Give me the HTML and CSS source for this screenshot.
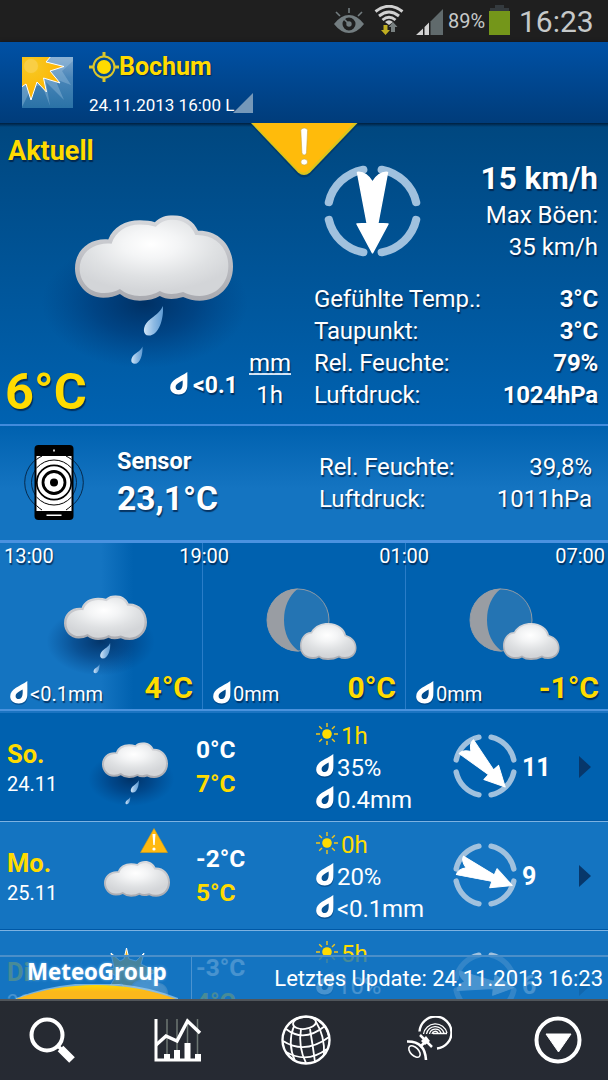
FILE: index.html
```html
<!DOCTYPE html>
<html lang="de">
<head>
    <meta charset="UTF-8">
    <meta name="viewport" content="width=device-width, initial-scale=1.0">
    <title>Wetter - Bochum</title>

    <link rel="stylesheet" href="styles.css">
</head>
<body>
    <!-- Shared icons -->
    <svg class="defs" width="0" height="0">
        <defs>
            <radialGradient id="cloudFill" cx="0.48" cy="0.32" r="0.62">
                <stop offset="0" stop-color="#ffffff"/>
                <stop offset="0.3" stop-color="#f4f5f6"/>
                <stop offset="0.7" stop-color="#dfe1e3"/>
                <stop offset="1" stop-color="#d3d5d8"/>
            </radialGradient>
            <linearGradient id="cloudEdge" x1="0" y1="0" x2="0" y2="1">
                <stop offset="0" stop-color="#d8dade"/>
                <stop offset="0.5" stop-color="#bfc0c5"/>
                <stop offset="1" stop-color="#a9aab0"/>
            </linearGradient>
            <radialGradient id="shade">
                <stop offset="0" stop-color="#002a5a" stop-opacity="0.85"/>
                <stop offset="0.5" stop-color="#00306a" stop-opacity="0.5"/>
                <stop offset="1" stop-color="#003a7a" stop-opacity="0"/>
            </radialGradient>
            <linearGradient id="dropFill" x1="0" y1="0" x2="1" y2="0">
                <stop offset="0" stop-color="#cfe4f7"/>
                <stop offset="0.5" stop-color="#8fbbe4"/>
                <stop offset="1" stop-color="#5f9bd3"/>
            </linearGradient>
            <radialGradient id="sunFill" gradientUnits="userSpaceOnUse" cx="9" cy="9" r="32">
                <stop offset="0" stop-color="#fbd653"/>
                <stop offset="0.25" stop-color="#f8c41c"/>
                <stop offset="1" stop-color="#ffb400"/>
            </radialGradient>
            <linearGradient id="skyFill" x1="0" y1="0" x2="0" y2="1">
                <stop offset="0" stop-color="#7ea6cc"/>
                <stop offset="0.4" stop-color="#4a86b9"/>
                <stop offset="1" stop-color="#2a72a6"/>
            </linearGradient>
            <linearGradient id="arcFill" x1="0" y1="0" x2="0" y2="1">
                <stop offset="0" stop-color="#ffd800"/>
                <stop offset="0.45" stop-color="#fbb81b"/>
            </linearGradient>
        </defs>
        <symbol id="cloud" viewBox="0 0 475 258">
            <path fill="url(#cloudEdge)" d="M100 73C115 35 150 15 195 15Q222 15 240 21C255 5 275 0 295 0C330 0 357 18 370 47C430 45 475 90 475 155C475 215 430 257 375 257Q348 257 325 246Q305 252 290 252Q270 252 255 243Q232 257 195 257Q160 257 135 237Q115 248 85 248C35 248 0 205 0 160C0 105 45 68 100 73Z"/>
            <path fill="url(#cloudFill)" d="M110 86C122 48 155 28 195 28Q222 28 243 35C258 19 275 14 295 14C325 14 350 30 362 60C420 57 461 97 461 153C461 205 425 242 375 243Q348 243 325 231Q305 237 290 237Q270 237 255 228Q232 243 195 243Q160 243 135 222Q115 234 87 234C42 234 14 198 14 160C14 115 55 80 110 86Z"/>
        </symbol>
        <symbol id="rain" viewBox="0 0 475 450" overflow="visible">
            <ellipse cx="210" cy="265" rx="310" ry="195" fill="url(#shade)"/>
            <use href="#cloud" width="475" height="258"/>
            <path fill="url(#dropFill)" d="M264 273C268 310 252 362 222 362C202 361 203 335 220 318C240 300 255 295 264 273Z"/>
            <path fill="url(#dropFill)" d="M203 395C204 420 196 447 180 447C166 446 167 431 176 421C188 411 197 408 203 395Z"/>
        </symbol>
        <symbol id="moon" viewBox="0 0 91 72">
            <circle cx="32" cy="32" r="31" fill="#5a90b8" fill-opacity="0.4" stroke="#8e9aa6" stroke-width="1"/>
            <path fill="#999da3" d="M32 .5A31.500 31.500 0 0 0 33 63.500Q18 52 18 32Q18 12 32 .5Z"/>
            <path fill="url(#cloudEdge)" d="M45 44C49 37 56 35 62 35C72 35 79 41 80 47C87 49 90.500 54 90.500 60C90.500 67 85 71 79 71Q75 71 73 69.500Q68 72 62 72Q56 72 53 69.500Q50 71 47 71C39 71 34 66 34 58C34 50 39 44 45 44Z"/>
            <path fill="url(#cloudFill)" d="M46 45.500C50 38.500 56 36.500 62 36.500C71 36.500 77 42 78.500 48.200C85 50 89 54.500 89 60C89 66 84 69 79 69Q75 69 73 67.500Q68 70 62 70Q56 70 53 67.500Q50 69 47 69C40 69 35.500 65 35.500 58C35.500 51 40 45.500 46 45.500Z"/>
        </symbol>
        <symbol id="drop" viewBox="0 0 18 24">
            <path fill="#00356b" fill-opacity="0.5" transform="translate(.3 1.400)" d="M17.300 0C17.500 6 17.500 11 17.300 14.500C17 19.500 13.500 22.500 8.800 22.500C3.500 22.500 .2 19.500 .2 15.500C.2 7.500 10 5.500 17.300 0Z"/>
            <path fill="#fff" fill-rule="evenodd" d="M17.300 0C17.500 6 17.500 11 17.300 14.500C17 19.500 13.500 22.500 8.800 22.500C3.500 22.500 .2 19.500 .2 15.500C.2 7.500 10 5.500 17.300 0ZM12.600 8.500C9 10.500 5.700 12 5.600 15.200C5.600 17.200 7.200 18.200 9 18C12.600 17.500 13 13 12.600 8.500Z"/>
        </symbol>
        <symbol id="sun" viewBox="0 0 22 22">
            <circle cx="11" cy="11" r="4.800" fill="#ffdb00"/>
            <path stroke="#f2c51a" stroke-width="1.400" d="M11 0V4M11 18V22M0 11H4M18 11H22M3.200 3.200L6 6M16 16L18.800 18.800M3.200 18.800L6 16M16 6L18.800 3.200"/>
        </symbol>
        <symbol id="ring" viewBox="0 0 100 100">
            <path fill="none" stroke="#a0c1de" stroke-width="8.500" stroke-linecap="round" d="M40.500 5A46 46 0 0 0 5 40.500M59.500 5A46 46 0 0 1 95 40.500M40.500 95A46 46 0 0 1 5 59.500M59.500 95A46 46 0 0 0 95 59.500"/>
        </symbol>
        <symbol id="arrow" viewBox="0 0 100 100" overflow="visible">
            <path fill="#fff" stroke="#fff" stroke-width="1.500" stroke-linejoin="round" d="M34.500 8Q43 7 50 18.500Q57 7 65.500 8L55.500 63.500L66 64L50 95.500L34 64L44.500 63.500Z"/>
        </symbol>
    </svg>

    <div class="statusbar">
        <svg class="eye" width="30" height="26" viewBox="0 0 30 26">
            <path fill="#737d80" fill-rule="evenodd" d="M0 16Q7 7 15 7Q23 7 30 16Q23 25 15 25Q7 25 0 16ZM15 9.500A6.500 6.500 0 1 0 15 22.500A6.500 6.500 0 1 0 15 9.500Z"/>
            <circle cx="15" cy="16" r="2.700" fill="#737d80"/>
            <path stroke="#737d80" stroke-width="1.600" d="M15 0V5M2 4L6 8M28 4L24 8M10 11L15 16"/>
        </svg>
        <svg class="wifi" width="30" height="30" viewBox="0 0 30 30">
            <g fill="none" stroke="#d0d0d0" stroke-width="2.900">
                <path d="M1.500 6.500Q15-4 28.500 6.500M5 11Q15 3 25 11M8.500 15Q15 9.500 21.500 15"/>
            </g>
            <path fill="#d0d0d0" d="M11 17Q15 13.500 19 17L15 20Z"/>
            <path fill="#c0ae20" d="M9.500 20H13.500V25H16L11.500 30L7 25H9.500Z"/>
            <path fill="#788080" d="M17 27V22H14.700L19 17L23.500 22H21V27Z"/>
        </svg>
        <svg class="signal" width="27" height="26" viewBox="0 0 27 26">
            <path fill="#d2d2d2" d="M0 26L7 19.500V26ZM8.500 26V18L13 13.500V26Z"/>
            <path fill="#606a6c" d="M14.500 26V12.500L27 0V26Z"/>
        </svg>
        <span class="percent">89%</span>
        <svg class="battery" width="21" height="30" viewBox="0 0 21 30">
            <path fill="#343a3e" d="M6 0H15V3H20V6H1V3H6Z"/>
            <path fill="#74961a" d="M0 6H21V30H0Z"/>
        </svg>
        <span class="clock">16:23</span>
    </div>

    <header class="header">
        <svg class="logo" width="51" height="51" viewBox="0 0 51 51">
            <path fill="url(#skyFill)" d="M0 0H51V51H0Z"/>
            <path fill="#a9cbe6" fill-opacity="0.35" d="M20 28L28 49L24 25L42 43L33 22L49 28L40 14L51 4V0H30L0 25V50L10 30Z"/>
            <path fill="url(#sunFill)" stroke="#fff" stroke-width="1" d="M-2-2H30L24 5L42 9.500L28 14L38 26L21.500 21L24.500 35L15 25L9 43L4 27L-2 31Z"/>
            <circle cx="9" cy="9" r="7" fill="#f9ce45"/>
        </svg>
        <div class="place">
            <div class="city">
                <svg width="30" height="30" viewBox="0 0 30 30">
                    <circle cx="15" cy="15" r="7" fill="#ffdb00"/>
                    <circle cx="15" cy="15" r="10.500" fill="none" stroke="#dcc62a" stroke-width="2"/>
                    <path stroke="#dcc62a" stroke-width="3" d="M15 0V5M15 25V30M0 15H5M25 15H30"/>
                </svg>
                <h1>Bochum</h1>
            </div>
            <div class="stamp">
                <span>24.11.2013 16:00 L</span>
                <svg width="20" height="20" viewBox="0 0 20 20"><path fill="#7598b9" d="M0 20L20 0V20Z"/></svg>
            </div>
        </div>
    </header>

    <section class="current">
        <svg class="alert" width="110" height="58" viewBox="0 0 110 58">
            <path fill="#002b55" fill-opacity="0.5" d="M2 3H107L60 52Q54 57 48 52Z"/>
            <path fill="#d9c51d" d="M1 0H107.500L60 49.500Q54 54.500 48 49.500Z"/>
            <path fill="#ffbb0b" d="M3 0H104L59 47Q54 52 49 48Z"/>
            <path fill="#fff" stroke="#c9a53b" stroke-width="0.600" d="M50.800 7.500Q51 5 54.200 5Q57.400 5 57.600 7.500L56.500 29.500Q56.300 32 54.200 32Q52.100 32 51.900 29.500Z"/>
            <ellipse cx="54.200" cy="39" rx="3.400" ry="3" fill="#fff" stroke="#c9a53b" stroke-width="0.600"/>
        </svg>
        <div class="now">
            <h2>Aktuell</h2>
            <svg class="now-icon" width="158" height="150"><use href="#rain"/></svg>
            <div class="now-row">
                <span class="now-temp">6°C</span>
                <svg class="now-drop" width="18" height="24"><use href="#drop"/></svg>
                <span class="now-rain">&lt;0.1</span>
                <div class="unit"><span>mm</span><span>1h</span></div>
            </div>
        </div>
        <div class="facts">
            <div class="wind">
                <svg width="97" height="92" viewBox="0 0 100 100" preserveAspectRatio="none">
                    <use href="#ring"/>
                    <use href="#arrow"/>
                </svg>
                <div class="speed">
                    <b>15 km/h</b>
                    <span>Max Böen:</span>
                    <span>35 km/h</span>
                </div>
            </div>
            <dl>
                <div><dt>Gefühlte Temp.:</dt><dd>3°C</dd></div>
                <div><dt>Taupunkt:</dt><dd>3°C</dd></div>
                <div><dt>Rel. Feuchte:</dt><dd>79%</dd></div>
                <div><dt>Luftdruck:</dt><dd>1024hPa</dd></div>
            </dl>
        </div>
    </section>

    <section class="sensor">
        <svg width="60" height="76" viewBox="0 0 60 76">
            <g fill="none" stroke="#04213f" stroke-width="0.900">
                <circle cx="30" cy="37.500" r="29.300"/>
                <circle cx="30" cy="37.500" r="22.500"/>
            </g>
            <rect x="10.500" y="0" width="39" height="75" rx="4" fill="#000"/>
            <path fill="#fff" d="M12.500 11H47.500V66H12.500Z"/>
            <g fill="none" stroke="#000">
                <path stroke-width="1" d="M12.500 14.500A29.300 29.300 0 0 1 18 11M42 11A29.300 29.300 0 0 1 47.500 14.500M12.500 60.500A29.300 29.300 0 0 0 18 65M42 65A29.300 29.300 0 0 0 47.500 60.500M12.500 23Q20 15 30 15Q40 15 47.500 23M12.500 52Q20 60 30 60Q40 60 47.500 52"/>
                <circle cx="30" cy="37.500" r="17.200" stroke-width="1.700"/>
                <circle cx="30" cy="37.500" r="11" stroke-width="2.800"/>
            </g>
            <circle cx="30" cy="37.500" r="4" fill="#000"/>
            <path fill="#fff" d="M22.500 69.500H37.500V71H22.500ZM29.200 4.500H30.800V6.500H29.200Z"/>
        </svg>
        <div class="sensor-temp">
            <h3>Sensor</h3>
            <b>23,1°C</b>
        </div>
        <dl>
            <div><dt>Rel. Feuchte:</dt><dd>39,8%</dd></div>
            <div><dt>Luftdruck:</dt><dd>1011hPa</dd></div>
        </dl>
    </section>

    <section class="hours">
        <div class="hour past">
            <span class="time first">13:00</span>
            <span class="time">19:00</span>
            <svg class="hour-rain" width="83" height="79"><use href="#rain"/></svg>
            <div class="hour-row">
                <svg width="18" height="24"><use href="#drop"/></svg>
                <span>&lt;0.1mm</span>
                <b>4°C</b>
            </div>
        </div>
        <div class="hour">
            <span class="time mid">01:00</span>
            <svg class="hour-moon" width="91" height="72"><use href="#moon"/></svg>
            <div class="hour-row">
                <svg width="18" height="24"><use href="#drop"/></svg>
                <span>0mm</span>
                <b>0°C</b>
            </div>
        </div>
        <div class="hour">
            <span class="time last">07:00</span>
            <svg class="hour-moon" width="91" height="72"><use href="#moon"/></svg>
            <div class="hour-row">
                <svg width="18" height="24"><use href="#drop"/></svg>
                <span>0mm</span>
                <b>-1°C</b>
            </div>
        </div>
    </section>

    <section class="days">
        <div class="day dark">
            <div class="date"><b>So.</b><span>24.11</span></div>
            <div class="day-icon"><svg class="day-rain" width="66" height="63"><use href="#rain"/></svg></div>
            <div class="range"><b>0°C</b><b class="max">7°C</b></div>
            <div class="details">
                <div class="sunny"><svg width="22" height="22"><use href="#sun"/></svg>1h</div>
                <div><svg width="18" height="24"><use href="#drop"/></svg>35%</div>
                <div><svg width="18" height="24"><use href="#drop"/></svg>0.4mm</div>
            </div>
            <svg class="compass" width="64" height="64" viewBox="0 0 100 100">
                <use href="#ring"/>
                <use href="#arrow" transform="rotate(-44 50 50)"/>
            </svg>
            <b class="force">11</b>
            <svg class="more" width="12" height="22" viewBox="0 0 12 22"><path fill="#07376b" d="M0 0L12 11L0 22Z"/></svg>
        </div>
        <div class="day">
            <div class="date"><b>Mo.</b><span>25.11</span></div>
            <div class="day-icon">
                <svg class="warn" width="28" height="25" viewBox="0 0 28 25">
                    <path fill="#ffb90f" stroke="#d99e12" stroke-width="0.600" stroke-linejoin="round" d="M14 .5L27.500 24.500H.5Z"/>
                    <path fill="#fff" d="M12.500 6H15.500L14.700 17H13.300Z"/>
                    <circle cx="14" cy="21" r="1.600" fill="#fff"/>
                </svg>
                <svg class="day-cloud" width="66" height="36"><use href="#cloud"/></svg>
            </div>
            <div class="range"><b>-2°C</b><b class="max">5°C</b></div>
            <div class="details">
                <div class="sunny"><svg width="22" height="22"><use href="#sun"/></svg>0h</div>
                <div><svg width="18" height="24"><use href="#drop"/></svg>20%</div>
                <div><svg width="18" height="24"><use href="#drop"/></svg>&lt;0.1mm</div>
            </div>
            <svg class="compass" width="64" height="64" viewBox="0 0 100 100">
                <use href="#ring"/>
                <use href="#arrow" transform="rotate(-69 50 50)"/>
            </svg>
            <b class="force">9</b>
            <svg class="more" width="12" height="22" viewBox="0 0 12 22"><path fill="#07376b" d="M0 0L12 11L0 22Z"/></svg>
        </div>
        <div class="day">
            <div class="date"><b>Di.</b><span>26.11</span></div>
            <div class="day-icon">
                <svg class="day-sun" width="66" height="60" viewBox="0 0 66 60">
                    <path fill="#f5b51b" stroke="#fff" stroke-width="1" d="M24.500 0L27 11L34 13L42 5L39 16L45 19L54 24L44 28L46 38L36 36L25 46L20 36L8 38L14 28L5 22L12 20L9 5L18 13L22 11Z"/>
                    <svg x="20" y="30" width="46" height="26"><use href="#cloud"/></svg>
                </svg>
            </div>
            <div class="range"><b>-3°C</b><b class="max">4°C</b></div>
            <div class="details">
                <div class="sunny"><svg width="22" height="22"><use href="#sun"/></svg>5h</div>
                <div><svg width="18" height="24"><use href="#drop"/></svg>10%</div>
            </div>
            <svg class="compass" width="64" height="64" viewBox="0 0 100 100">
                <use href="#ring"/>
                <use href="#arrow" transform="rotate(-83 50 50)"/>
            </svg>
            <b class="force">6</b>
            <svg class="more" width="12" height="22" viewBox="0 0 12 22"><path fill="#07376b" d="M0 0L12 11L0 22Z"/></svg>
        </div>
        <div class="update">
            <div class="brand">
                <span>MeteoGroup</span>
                <svg width="162" height="16" viewBox="0 0 162 16">
                    <path fill="#b9dcf2" fill-opacity="0.6" d="M0 14Q38-1 81-1Q124-1 162 14V16H0Z"/>
                    <path fill="url(#arcFill)" d="M0 15Q38 1 80 1Q122 1 160 15V16H0Z"/>
                </svg>
            </div>
            <p>Letztes Update: 24.11.2013 16:23</p>
        </div>
    </section>

    <nav class="nav">
        <svg width="46" height="47" viewBox="0 0 46 47">
            <circle cx="18" cy="18" r="15.500" fill="none" stroke="#fff" stroke-width="4"/>
            <path stroke="#fff" stroke-width="3.500" d="M28 28L33 33"/>
            <path stroke="#fff" stroke-width="8" d="M31.500 31.500L43 43"/>
        </svg>
        <svg width="48" height="46" viewBox="0 0 48 46">
            <path stroke="#6d7773" stroke-width="1.500" d="M13 2V37M23 2V34M33.500 2V26M43.500 2V38"/>
            <path fill="none" stroke="#fff" stroke-width="3" d="M2 2V43H47"/>
            <path fill="none" stroke="#fff" stroke-width="3.500" d="M2 28L12 19L23 24L33.500 4L46 16"/>
            <path fill="#fff" d="M10 37H16V44H10ZM20 33H26V44H20ZM30.500 26H36.500V44H30.500ZM41 37H47V44H41Z"/>
        </svg>
        <svg width="50" height="50" viewBox="0 0 50 50">
            <g fill="none" stroke="#fff" stroke-width="1.800">
                <circle cx="25" cy="25" r="23.500" stroke-width="2.400"/>
                <ellipse cx="23.500" cy="8" rx="11.500" ry="6" transform="rotate(-6 23 8)"/>
                <path d="M5 14Q23 28 44 11M2 26Q24 40 48 22M5 37Q26 49 46 34"/>
                <path d="M13 11Q6 28 14 46M20 14Q17 32 25 48M29 14Q32 32 34 47M35 7Q44 21 43 40M38 6Q46 12 48 22"/>
            </g>
        </svg>
        <svg class="satellite" width="46" height="46" viewBox="0 0 46 46">
            <g fill="none" stroke="#fff">
                <path stroke-width="2.400" d="M13.500 15.500A16 16 0 1 1 31 32.500"/>
                <path stroke-width="1.300" d="M17.500 18A12 12 0 0 1 41 17M20.500 18A9 9 0 0 1 38 17M23.500 18A6 6 0 0 1 35 17M26 18A3.200 3.200 0 0 1 32 17M27 17.500H41"/>
                <path stroke-width="2.600" d="M1 25.500Q19 25 20 44"/>
                <ellipse cx="8.500" cy="35.500" rx="7" ry="4" transform="rotate(45 8.500 35.500)" stroke-width="1.600"/>
                <path stroke-width="2.500" d="M14 31L19 26M14 19L26 31"/>
            </g>
            <path fill="#fff" d="M15 25L20 20L24 25L19 29Z"/>
        </svg>
        <svg width="48" height="48" viewBox="0 0 48 48">
            <circle cx="24" cy="24" r="21.500" fill="none" stroke="#fff" stroke-width="4"/>
            <path fill="#fff" stroke="#fff" stroke-width="1" stroke-linejoin="round" d="M12 18H37L24.500 36Z"/>
        </svg>
    </nav>
</body>
</html>
```
FILE: styles.css
```css
* {
    margin: 0;
    padding: 0;
    box-sizing: border-box;
}

body {
    width: 608px;
    height: 1080px;
    overflow: hidden;
    display: flex;
    flex-direction: column;
    font-family: Roboto, sans-serif;
    font-size: 24px;
    line-height: 32px;
    color: #fff;
    background: #0060ae;
}

svg {
    display: block;
    flex-shrink: 0;
}

.defs {
    position: absolute;
}

/* Status bar */
.statusbar {
    height: 42px;
    flex-shrink: 0;
    background: #1f1f1f;
    display: flex;
    justify-content: flex-end;
    align-items: flex-start;
    padding-right: 15px;
    color: #c6c9c9;
}

.eye {
    margin: 8px 10px 0 0;
}

.wifi {
    margin: 5px 12px 0 0;
}

.signal {
    margin: 9px 5px 0 0;
}

.percent {
    font-size: 20px;
    line-height: 43px;
    width: 41px;
}

.battery {
    margin: 5px 9px 0 0;
}

.clock {
    font-size: 30px;
    line-height: 44px;
    width: 74px;
    white-space: nowrap;
}

/* Header */
.header {
    height: 81px;
    flex-shrink: 0;
    position: relative;
    z-index: 1;
    display: flex;
    padding: 15px 22px 0;
    background: linear-gradient(#0051a5, #003c7a);
    box-shadow: 0 1px 4px rgba(0,10,30,0.9);
}

.place {
    margin: -6px 0 0 16px;
}

.city {
    display: flex;
    align-items: center;
    height: 32px;
}

.city h1 {
    font-size: 25px;
    line-height: 34px;
    color: #ffdb00;
    text-shadow: 1px 1px 1px rgba(0,20,50,0.6);
}

.stamp {
    display: flex;
    align-items: flex-end;
    font-size: 17px;
    line-height: 26px;
    height: 32px;
}

.stamp svg {
    margin: 0 0 2px -1px;
}

.stamp span {
    margin-bottom: -3px;
}

/* Current weather */
.current {
    height: 303px;
    flex-shrink: 0;
    position: relative;
    z-index: 2;
    display: grid;
    grid-template-columns: 304px 304px;
    background: linear-gradient(#00477f, #0062b1);
    border-bottom: 2px solid #418bdc;
    text-shadow: 1px 2px 1px rgba(0,25,60,0.7);
}

.current::before {
    content: "";
    position: absolute;
    left: 0;
    right: 0;
    top: 0;
    height: 4px;
    background: linear-gradient(#00203f, rgba(0,50,90,0));
}

.alert {
    position: absolute;
    left: 250px;
    top: 0;
}

.now {
    display: flex;
    flex-direction: column;
}

h2 {
    margin: 12px 0 0 8px;
    font-size: 27px;
    line-height: 32px;
    color: #ffdb00;
}

.now-icon {
    margin: 48px 0 0 75px;
    overflow: visible;
}

.now-row {
    display: flex;
    align-items: flex-start;
    margin-top: -15px;
    padding-left: 5px;
    position: relative;
}

.now-temp {
    width: 165px;
    font-size: 50.5px;
    line-height: 56px;
    margin-top: 14px;
    font-weight: bold;
    color: #ffdb00;
}

.now-drop {
    margin-top: 22px;
}

.now-rain {
    font-weight: bold;
    font-size: 23px;
    margin: 20px 0 0 5px;
    width: 55px;
}

.unit {
    display: flex;
    flex-direction: column;
    align-items: center;
}

.unit span:first-child {
    line-height: 26px;
    height: 25px;
    margin: 0 0 4px 1px;
    border-bottom: 2px solid #d5e5f5;
}

.facts {
    padding: 38px 10px 0 10px;
}

.wind {
    display: flex;
    justify-content: space-between;
    height: 122px;
    padding-left: 10px;
}

.wind > svg {
    margin-top: 4px;
}

.speed {
    display: flex;
    flex-direction: column;
    align-items: flex-end;
}

.speed b {
    font-size: 31.5px;
    line-height: 35px;
    margin-bottom: 3px;
}

dl div {
    display: flex;
    justify-content: space-between;
}

dt {
    letter-spacing: -0.1px;
}

.current dd {
    font-weight: bold;
    letter-spacing: -0.2px;
}

/* Sensor */
.sensor {
    height: 117px;
    flex-shrink: 0;
    display: flex;
    padding: 19px 16px 0 24px;
    background: linear-gradient(#0061af, #1474c1 55%, #1474c1);
    border-bottom: 3px solid #4a92e0;
    text-shadow: 1px 2px 1px rgba(0,25,60,0.7);
}

.sensor-temp {
    width: 202px;
    padding-left: 33px;
}

.sensor-temp h3 {
    font-size: 23.5px;
    line-height: 32px;
}

.sensor-temp b {
    display: block;
    font-size: 33.5px;
    line-height: 44px;
}

.sensor dl {
    flex: 1;
    padding: 6px 0 0 33px;
}

/* Next hours */
.hours {
    height: 170px;
    flex-shrink: 0;
    display: grid;
    grid-template-columns: 203px 203px 202px;
    background: #0061af;
    border-bottom: 2px solid #1b74c2;
    box-shadow: inset 0 -2px 0 #4a92dd;
    text-shadow: 1px 2px 1px rgba(0,25,60,0.7);
}

.hour {
    position: relative;
    height: 166px;
    border-right: 1px solid #2a7dc8;
    display: flex;
    flex-direction: column;
}

.hour:last-child {
    border-right: none;
}

.past {
    background: linear-gradient(90deg, #1474c1 50%, #0061af 66%);
}

.time {
    position: absolute;
    z-index: 1;
    top: 0;
    right: -27px;
    font-size: 20px;
    line-height: 26px;
}

.time.first {
    left: 4px;
    right: auto;
}

.time.mid {
    right: -24px;
}

.time.last {
    right: 3px;
}

.hour-rain {
    margin: 52px 0 0 64px;
    overflow: visible;
}

.hour-moon {
    margin: 45px 0 0 63px;
}

.hour-row {
    display: flex;
    margin: auto 9px -1px 10px;
    position: relative;
    font-size: 20px;
}

.hour-row svg {
    margin: 3px 2px 0 0;
}

.hour-row b {
    margin: -6px 0 0 auto;
    color: #ffdb00;
    font-size: 30px;
}

/* Daily list */
.days {
    height: 286px;
    flex-shrink: 0;
    overflow: hidden;
    position: relative;
}

.day {
    height: 109px;
    display: flex;
    background: #1474c1;
    border-bottom: 1px solid #7cb2e2;
    box-shadow: inset 0 -1px 0 #0058a5;
}

.dark {
    background: #0061af;
}

.date {
    width: 89px;
    padding: 25px 0 0 7px;
    display: flex;
    flex-direction: column;
}

.date b {
    font-size: 25.5px;
    color: #ffdb00;
}

.date span {
    font-size: 20px;
    line-height: 28px;
}

.day-icon {
    width: 107px;
    position: relative;
}

.day-icon svg {
    overflow: visible;
}

.day-rain {
    margin: 29px 0 0 13px;
}

.day-cloud {
    margin: 39px 0 0 15px;
}

.day-sun {
    margin: 17px 0 0 13px;
}

.warn {
    position: absolute;
    left: 51px;
    top: 6px;
}

.range {
    width: 120px;
    padding-top: 20px;
    display: flex;
    flex-direction: column;
    font-size: 24.5px;
    line-height: 34px;
}

.max {
    color: #ffdb00;
}

.details {
    width: 137px;
    padding-top: 7px;
}

.details div {
    display: flex;
    align-items: center;
    gap: 3px;
    letter-spacing: -0.1px;
}

.details svg {
    margin-top: -4px;
}

.sunny {
    color: #ffdb00;
}

.compass {
    margin-top: 21px;
}

.force {
    width: 62px;
    padding-left: 5px;
    margin-top: 39px;
    font-size: 25px;
}

.more {
    margin-top: 43px;
}

.update {
    position: absolute;
    left: 0;
    right: 0;
    bottom: 0;
    height: 44px;
    display: flex;
    background: rgba(20,116,193,0.78);
    border-top: 2px solid #4b8fc9;
}

.brand {
    width: 192px;
    height: 42px;
    border-right: 1px solid #4b93d0;
    position: relative;
}

.brand span {
    display: block;
    margin-left: 27px;
    font-family: "Open Sans", sans-serif;
    font-size: 22.3px;
    font-weight: bold;
    line-height: 29px;
    text-shadow: 0 0 3px #6cb4ea;
}

.brand svg {
    margin: -2px 0 0 16px;
}

.update p {
    flex: 1;
    padding-right: 5px;
    text-align: right;
    line-height: 44px;
    font-size: 22px;
}

/* Bottom navigation */
.nav {
    height: 81px;
    flex-shrink: 0;
    display: flex;
    justify-content: space-between;
    align-items: center;
    padding: 0 26px 1px 29px;
    background: linear-gradient(#262a31, #262a33);
    border-top: 2px solid #50555a;
}

.satellite {
    margin: -3px 3px 0 -3px;
}
```
